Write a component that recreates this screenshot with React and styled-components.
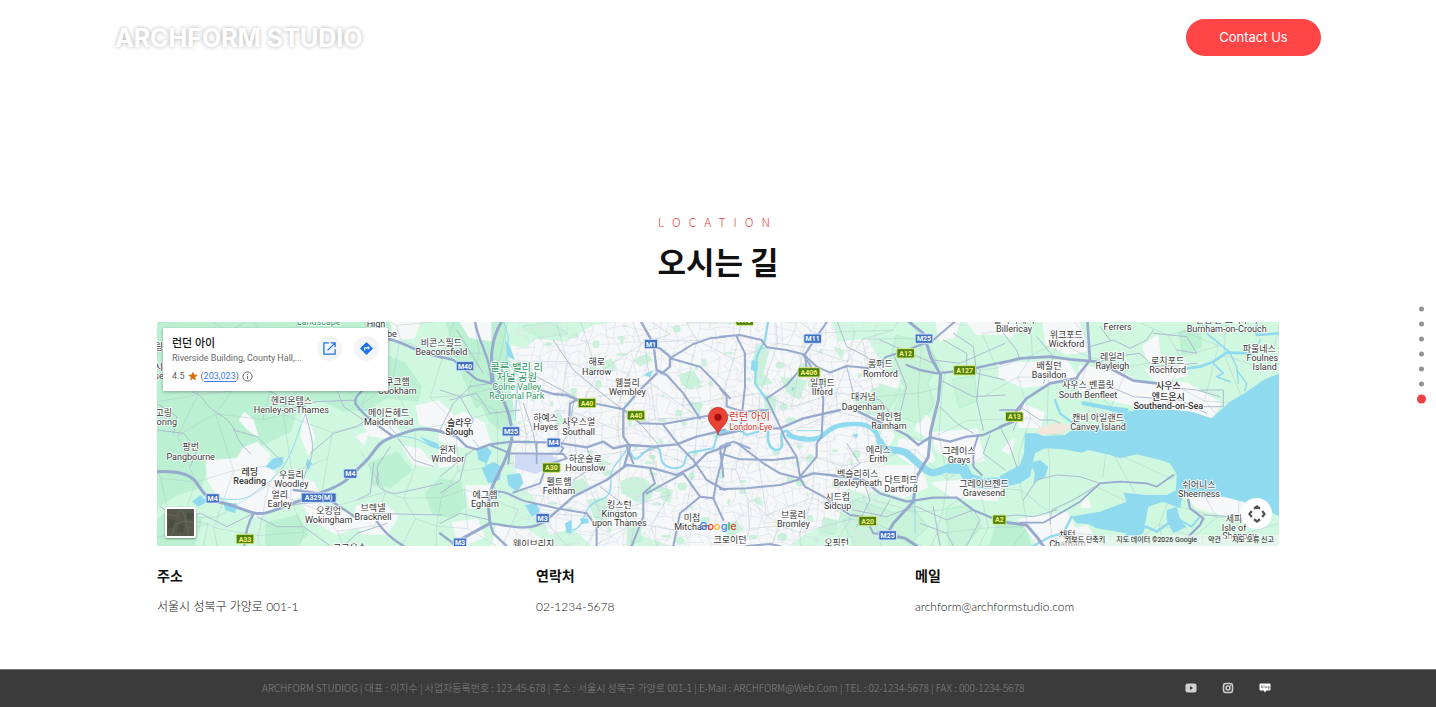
import styled, { createGlobalStyle } from 'styled-components';

const GlobalStyle = createGlobalStyle`
  * {
    box-sizing: border-box;
  }
  body {
    margin: 0;
    background: #fff;
    color: #111;
    font-family: Inter, 'Noto Sans CJK KR', sans-serif;
  }
  a {
    color: inherit;
    text-decoration: none;
  }
  button {
    padding: 0;
    border: 0;
    font: inherit;
    cursor: pointer;
  }
  h1, h2, h3, p {
    margin: 0;
  }
`;

const Page = styled.div`
  min-height: 100vh;
  display: flex;
  flex-direction: column;
`;

const Header = styled.header`
  height: 75px;
  padding: 0 115px;
  display: flex;
  justify-content: space-between;
  align-items: center;
`;

const Logo = styled.a`
  font-size: 25px;
  line-height: 36px;
  font-weight: 700;
  color: #fff;
  text-shadow: 0 0 4px rgba(0, 0, 0, 0.3);
`;

const ContactButton = styled.button`
  width: 135px;
  height: 37px;
  padding-bottom: 2px;
  border-radius: 20px;
  background: #ff4545;
  color: #fff;
  font-size: 13px;
`;

const Main = styled.main`
  flex: 1;
  padding: 135px 157px 0;
`;

const Heading = styled.div`
  display: flex;
  flex-direction: column;
  align-items: center;
  margin-bottom: 34px;
`;

const Eyebrow = styled.p`
  font-family: 'Noto Sans CJK KR', sans-serif;
  font-size: 12px;
  line-height: 24px;
  font-weight: 300;
  letter-spacing: 8px;
  color: #e8453f;
`;

const Title = styled.h1`
  font-family: 'Noto Sans CJK KR', sans-serif;
  font-size: 31px;
  line-height: 54px;
  font-weight: 700;
`;

const MapBox = styled.section`
  position: relative;
  height: 224px;
  overflow: hidden;
  background: #d0f8e1;
  font-family: Roboto, 'Noto Sans CJK KR', sans-serif;
`;

const MapDrawing = styled.svg`
  display: block;
  width: 100%;
  height: 100%;
`;

const Road = styled.path`
  fill: none;
  stroke: ${props => (props.$minor ? '#adbccf' : '#97a9cd')};
  stroke-width: ${props => props.$width};
  stroke-linejoin: round;
  stroke-linecap: round;
`;

const River = styled.path`
  fill: none;
  stroke: #8fdaee;
  stroke-width: ${props => props.$width};
  stroke-linejoin: round;
  stroke-linecap: round;
`;

const PlaceName = styled.text`
  font-size: 27px;
  font-weight: ${props => (props.$bold ? 500 : 400)};
  fill: ${props => props.$color || '#333'};
  stroke: #fff;
  stroke-width: 5px;
  stroke-linejoin: round;
  paint-order: stroke;
  text-anchor: ${props => props.$anchor || 'middle'};
`;

const ShieldText = styled.text`
  font-size: 21px;
  font-weight: 700;
  fill: ${props => (props.$green ? '#fff27a' : '#fff')};
  text-anchor: middle;
`;

const PlaceCard = styled.article`
  position: absolute;
  top: 6px;
  left: 6px;
  width: 225px;
  height: 63px;
  padding: 8px 9px;
  display: flex;
  gap: 12px;
  background: #fff;
  box-shadow: 0 1px 3px rgba(0, 0, 0, 0.3);
`;

const PlaceInfo = styled.div`
  width: 137px;
  white-space: nowrap;
`;

const PlaceTitle = styled.h2`
  font-size: 11px;
  line-height: 16px;
  font-weight: 500;
`;

const PlaceAddress = styled.p`
  font-size: 9px;
  line-height: 13px;
  color: #666;
`;

const Rating = styled.div`
  display: flex;
  align-items: center;
  gap: 3px;
  margin-top: 4px;
  font-size: 9px;
  line-height: 14px;
  color: #5b5b5b;

  a {
    color: #3b78e7;
    border-bottom: 1px solid #3b78e7;
  }
  span {
    line-height: 10px;
  }
`;

const RoundButton = styled.button`
  flex: none;
  width: 25px;
  height: 25px;
  border-radius: 50%;
  display: flex;
  align-items: center;
  justify-content: center;
  background: #f3f4f5;
`;

const SatelliteButton = styled.button`
  position: absolute;
  left: 8px;
  bottom: 8px;
  width: 31px;
  height: 31px;
  border: 2px solid #fff;
  border-radius: 2px;
  overflow: hidden;
  box-shadow: 0 1px 2px rgba(0, 0, 0, 0.4);

  svg {
    display: block;
  }
`;

const PanButton = styled.button`
  position: absolute;
  right: 7px;
  bottom: 17px;
  width: 31px;
  height: 31px;
  border-radius: 50%;
  background: #fff;
  display: flex;
  align-items: center;
  justify-content: center;
`;

const GoogleMark = styled.a`
  position: absolute;
  left: 50%;
  bottom: 13px;
  transform: translateX(-50%);
  font-family: Inter, sans-serif;
  font-size: 11px;
  line-height: 14px;
  font-weight: 500;
`;

const GoogleLetter = styled.span`
  color: ${props => props.$color};
`;

const MapTerms = styled.div`
  position: absolute;
  right: 0;
  bottom: 0;
  display: flex;
  gap: 1px;
  font-size: 7px;
  line-height: 11px;
  white-space: nowrap;

  > * {
    padding: 0 5px;
    background: rgba(245, 245, 245, 0.6);
    color: #111;
  }
`;

const Contacts = styled.section`
  display: grid;
  grid-template-columns: repeat(3, 1fr);
  gap: 15px;
  padding: 18px 0 39px;
  font-family: Lato, 'Noto Sans CJK KR', sans-serif;
`;

const ContactTitle = styled.h3`
  font-size: 14px;
  line-height: 24px;
  font-weight: 700;
`;

const ContactText = styled.p`
  margin-top: 7px;
  font-size: 12px;
  line-height: 24px;
  font-weight: 300;
  color: #111;
`;

const Footer = styled.footer`
  min-height: 38px;
  padding: 0 165px 2px 262px;
  display: flex;
  align-items: center;
  justify-content: space-between;
  background: #3b3b3b;
  border-top: 1px solid #777;
  color: #858585;
  font-family: 'Noto Sans CJK KR', sans-serif;
  font-size: 10px;
  line-height: 16px;
  font-weight: 300;
`;

const SocialLinks = styled.nav`
  display: flex;
  gap: 25px;

  a {
    display: flex;
  }
`;

const DotNav = styled.nav`
  position: fixed;
  right: 7px;
  top: 50%;
  transform: translateY(-50%);
  display: flex;
  flex-direction: column;
`;

const Dot = styled.a`
  width: 15px;
  height: 15px;
  display: flex;
  align-items: center;
  justify-content: center;

  &::before {
    content: '';
    width: ${props => (props.$active ? 9 : 5)}px;
    height: ${props => (props.$active ? 9 : 5)}px;
    border-radius: 50%;
    background: ${props => (props.$active ? '#ee4040' : '#929292')};
  }
`;

// The map is drawn in four tiles, side by side. x is where a tile starts.
const tiles = [
  {
    x: 0,
    forest: [
      'M0 0H560L540 150 480 240 420 250 400 330 300 380 250 410 150 430 130 500 60 520 0 560Z',
      'M560 0H700L690 80 640 140 690 230 640 260 560 270 480 230Z',
      'M0 600L70 560 130 600 110 678H0Z',
      'M640 90L740 130 790 200 780 240 680 230Z',
      'M640 430L720 400 760 450 700 500 650 490Z',
      'M330 610L420 590 450 640 410 678H330Z',
    ],
    urban: [
      'M150 425L240 418 262 385 300 370 335 405 325 440 370 470 410 470 420 530 350 570 300 590 250 560 180 520 155 480Z',
      'M262 280L285 300 300 345 272 325 250 300Z',
      'M420 470L470 490 500 560 570 580 600 620 540 640 470 600 430 540Z',
      'M600 560L680 550 720 590 690 640 620 640 590 600Z',
      'M620 310L690 300 730 340 700 355 640 345Z',
      'M780 260L845 245 900 300 850 325 790 310Z',
      'M740 380L790 390 830 440 770 430Z',
      'M440 270L470 350 455 400 435 350Z',
      'M700 0H790L770 50 720 60Z',
      'M600 350L630 340 620 370Z',
    ],
    lakes: [
      'M325 440L350 415 380 410 375 435 350 450Z',
      'M450 415L465 430 455 450 447 435Z',
      'M105 545L130 525 150 545 125 560Z',
      'M200 550L240 550 235 580 205 570Z',
      'M790 350L840 370 855 390 820 380Z',
    ],
    rivers: [['M130 540C180 520 240 560 290 520S380 470 420 350S450 300 440 240', 3], ['M600 270C700 260 690 350 740 350S800 380 855 385', 3]],
    minor: [
      'M105 215C150 230 130 250 190 285S220 350 280 400',
      'M0 330L80 340 120 390 100 440',
      'M330 210L370 230 390 270 480 245 600 240',
      'M440 250C450 320 480 370 460 420S440 480 430 510',
      'M460 400L530 340 600 320 640 290',
      'M540 210L560 260 620 300',
      'M370 560L440 550 520 545 610 600',
      'M665 460C640 500 690 520 720 520L855 490',
      'M720 350L770 420 830 440',
      'M640 580L855 585',
      'M10 560L70 600 130 580 210 620 290 580',
      'M300 590L360 620 440 620 520 678',
      'M700 380L660 440 665 490',
      'M230 330L300 350 380 430',
      'M0 250L60 290 50 340M600 540L640 520 650 430',
      'M560 678L600 640 690 610',
    ],
    major: [
      ['M0 455C60 452 100 460 120 490S150 540 200 550S290 590 330 578S420 545 500 515S580 465 620 430S650 370 710 350S780 318 855 335', 9],
      ['M680 55C740 60 750 90 855 112', 8],
      ['M710 350Q620 290 595 250Q590 230 625 205', 7],
      ['M290 580Q266 620 262 678', 7],
      ['M410 510L490 520 600 595M660 605Q690 650 740 678', 7],
    ],
    shields: [['M4', 167, 535], ['M4', 580, 461], ['A329(M)', 485, 533], ['A33', 264, 657, true]],
    places: [
      [485, -13, '', 'Landscape', '#2c9461'],
      [657, -6, '', 'High', ''],
      [660, 22, '', 'Wycombe', ''],
      [721, 194, '쿠크햄', 'Cookham', ''],
      [403, 251, '헨리온템스', 'Henley-on-Thames', ''],
      [695, 287, '메이든헤드', 'Maidenhead', ''],
      [20, 287, '고링', 'Goring', ''],
      [101, 391, '팡번', 'Pangbourne', ''],
      [278, 464, '레딩', 'Reading', 'bold'],
      [403, 474, '우들리', 'Woodley', ''],
      [368, 534, '얼리', 'Earley', ''],
      [515, 582, '오킹엄', 'Wokingham', ''],
      [648, 573, '브렉넬', 'Bracknell', ''],
      [578, 692, '크로우손', '', ''],
      [6, 89, '링', '', ''],
      [6, 149, '시', 'se', ''],
    ],
  },
  {
    x: 849,
    forest: [
      'M20 0H190L200 130 150 230 110 260 60 140Z',
      'M170 110L210 130 230 240 200 340 150 300 120 240Z',
      'M0 480L60 490 70 560 40 590 -20 580 -40 520Z',
      'M540 490C560 465 620 460 635 500S610 560 580 540L545 520Z',
      'M480 130L515 115 530 150 500 165Z',
      'M715 165L760 150 785 190 750 210 725 195Z',
      'M750 245L790 250 780 285Z',
      'M440 540L500 530 520 590 470 610Z',
      'M380 490L430 475 445 500 400 530Z',
      'M560 610L610 600 600 660 560 678Z',
      'M660 500L700 510 690 550 665 540Z',
      'M340 290L360 275 375 310 350 320Z',
      'M580 120L620 100 640 120 600 140Z',
      'M250 20L330 10 380 40 300 50Z',
    ],
    urban: [
      'M215 80L260 90 290 60 380 70 460 20 600 0H870V678H700L600 640 560 678H460L400 620 330 640 280 520 240 500 220 400 230 300 215 200Z',
      'M0 310L70 280 130 310 150 370 90 385 0 360Z',
      'M60 0L150 0 150 60 90 50Z',
      'M40 610L110 600 130 650 60 678Z',
      'M170 620L260 630 330 678H160Z',
      'M80 500L150 500 140 560 90 560Z',
      'M0 380L40 390 60 430 0 440Z',
    ],
    lakes: [
      'M110 390L135 375 155 395 140 430 115 420Z',
      'M125 445L160 425 185 440 180 480 145 490Z',
      'M200 465L240 460 250 490 230 515 205 495Z',
      'M255 555L290 550 300 575 275 590Z',
      'M375 610L395 600 395 640 380 640Z',
      'M420 595L445 595 445 610 425 612Z',
      'M195 60L210 80 225 120 205 110Z',
      'M610 165L640 150 630 172Z',
    ],
    rivers: [
      ['M190 0L205 50 200 120 235 170 225 300', 3],
      ['M400 630C440 620 420 560 480 540S490 470 530 430L560 390', 4],
      ['M570 395C590 450 610 380 645 380C680 390 640 435 700 445C760 445 715 395 765 395L820 385 832 345 870 336', 6],
      ['M100 360L130 400 150 480 180 530', 3],
    ],
    minor: [
      'M0 330L40 250 90 200 150 190',
      'M0 470L60 420 100 390',
      'M50 30L130 160M30 240L110 220 150 280 240 270',
      'M290 170L420 240M400 250L385 340 360 380',
      'M0 520L60 480 80 400',
      'M0 210L60 230 100 300 80 350',
      'M340 60L400 150 460 200 550 270',
      'M600 310L660 380 600 400',
      'M440 380L460 440 400 480',
      'M0 610L60 580 150 600',
      'M250 250L280 340 290 400',
      'M480 500L560 560 560 610',
    ],
    major: [
      ['M188 0C150 60 150 120 160 190C200 250 218 300 215 360C200 430 160 480 150 520C140 560 150 600 150 610L40 670', 9],
      ['M105 0C110 60 150 100 155 190', 7],
      ['M0 110L40 120 110 178 155 190M300 210L340 222 380 225 412 240', 7],
      ['M0 335L50 350 80 380 110 388 150 373 215 365 350 368 440 382 490 365 520 385 565 375 640 380 710 373 770 350 855 330', 7],
      ['M150 610C200 615 270 640 320 600L400 530 500 480 560 435 640 445 710 465 760 440 800 400 870 375', 7],
      ['M150 375L210 400 370 402 380 415 320 435 300 490 220 518M210 380L205 430', 6],
      ['M150 520C200 500 220 540 270 547L350 565 440 580 470 620 470 678', 6],
      ['M150 610L160 640 200 678M0 640L50 678', 7],
      ['M412 240L550 268 600 310 670 312 720 303 800 288 870 285', 6],
      ['M600 0L640 70 650 150 665 160 690 140 690 110 660 85 640 80M650 160L600 210 550 268 550 350 570 380 552 440', 7],
      ['M650 150L680 165 730 220 780 295M690 115L760 72 810 55 855 50M690 115L780 140 820 180 870 235', 6],
      ['M670 315L720 380 760 420 800 480 855 510M385 340L390 250 410 240', 6],
      ['M630 445L645 490 610 520 610 590 575 678M620 520L730 460 780 530 820 535 850 600M780 530L720 580 700 678', 6],
      ['M860 370L830 480 820 535M560 380L580 430M360 400L370 385 350 368', 6],
      ['M290 365V430', 5],
    ],
    airport: 'M225 405L330 402 365 425 310 450 290 462 225 445Z',
    shields: [
      ['M40', 75, 138],
      ['M25', 213, 334],
      ['M4', 341, 368],
      ['M3', 308, 594],
      ['M3', 60, 668],
      ['M1', 633, 72],
      ['A40', 441, 249, true],
      ['A40', 588, 286, true],
      ['A30', 334, 443, true],
    ],
    places: [
      [4, 78, '비콘스필드', 'Beaconsfield', ''],
      [230, 152, '콜른 밸리 리', '', '#2c9461', 31],
      [230, 184, '저널 공원', '', '#2c9461', 31],
      [230, 183, '', 'Colne Valley', '#2c9461'],
      [230, 208, '', 'Regional Park', '#2c9461'],
      [470, 136, '해로', 'Harrow', ''],
      [562, 197, '웸블리', 'Wembley', ''],
      [317, 303, '하예스', 'Hayes', ''],
      [416, 316, '사우스얼', 'Southall', ''],
      [58, 318, '슬라우', 'Slough', 'bold'],
      [23, 398, '윈저', 'Windsor', ''],
      [436, 425, '하운슬로', 'Hounslow', ''],
      [357, 494, '펠트햄', 'Feltham', ''],
      [135, 533, '에그햄', 'Egham', ''],
      [538, 564, '킹스턴', 'Kingston', ''],
      [538, 590, '', 'upon Thames', ''],
      [756, 602, '미첨', 'Mitcham', ''],
      [281, 682, '웨이브리지', '', ''],
    ],
  },
  {
    x: 1689,
    forest: [
      'M110 70L150 90 130 160 160 190 110 200 95 130Z',
      'M130 220L170 230 165 290 135 270Z',
      'M530 50L620 70 650 130 620 190 640 250 600 310 520 280 560 200 510 130Z',
      'M390 230L450 220 490 270 440 290Z',
      'M480 190L540 210 500 270 460 240Z',
      'M400 540L520 580 580 570 620 620 560 678H400Z',
      'M680 570L740 560 780 620 730 678H690Z',
      'M700 180L760 170 770 240 720 260Z',
      'M370 600L410 590 430 640 390 650Z',
      'M180 170L260 180 240 240 200 220Z',
      'M340 80L375 90 365 120Z',
      'M10 620L50 600 70 630 30 650Z',
      'M310 590L350 600 340 640 300 630Z',
      'M90 540L120 530 130 560Z',
    ],
    urban: [
      'M0 0H330L350 70 440 60 480 130 540 170 520 230 450 240 500 310 520 350 480 410 500 480 440 520 380 500 350 600 250 640 200 678H0Z',
      'M540 360L620 370 640 420 590 440 530 400Z',
      'M450 440L600 440 620 500 550 530 460 500Z',
      'M640 340L770 330 790 420 720 430 650 390Z',
      'M650 0H720L700 50 660 60Z',
      'M640 490L760 480 840 500 830 540 700 530Z',
      'M600 270L630 300 620 350 590 330Z',
      'M740 0H840L830 40 770 40Z',
      'M450 620L520 630 540 670 450 670Z',
    ],
    lakes: ['M95 120L115 125 112 155 92 150Z', 'M395 345L415 340 410 355Z', 'M215 200L225 205 215 215Z'],
    rivers: [
      ['M145 0L135 60 110 110 105 190 140 240', 7],
      ['M0 337L60 330 80 345 115 335', 7],
      ['M145 335C135 405 195 400 185 365C180 325 205 325 215 350L290 358', 8],
      ['M205 345C240 360 290 365 310 345S350 312 405 312S475 340 480 372', 14],
      ['M480 365C490 405 530 380 560 400S620 470 655 455S700 440 725 450', 22],
      ['M690 445L730 445 745 475 790 490 850 488', 32],
      ['M585 540V640M230 332H305', 3],
    ],
    minor: [
      'M350 0L380 80 440 110 500 160',
      'M380 140L400 220 480 240 520 290',
      'M700 40L760 80 770 160 855 180',
      'M660 180L760 230 855 225',
      'M670 60L740 100 740 150M780 150L770 240 790 330',
      'M660 260L710 310 760 340M520 100L560 200 540 280',
      'M430 480L450 540 410 620',
      'M590 560L680 600 760 570 780 600 740 678',
      'M380 370L420 430 360 470M600 610L680 640 700 678',
      'M400 570L500 590 580 560',
      'M810 345L790 400 855 450',
      'M640 120L720 130 855 70',
      'M510 540L480 590M640 560L660 678M480 60L640 130',
    ],
    major: [
      ['M0 50L60 45 125 60 140 82 200 90 250 103 290 140 330 158 380 138 450 145 500 110 540 98 640 60 710 0', 6],
      ['M325 0L290 50 255 103 260 150M240 150L200 195 140 235 180 320 195 355 230 410 240 470M250 105L300 180 310 240 305 350 290 370 290 410 240 470', 6],
      ['M50 50L75 100 75 200 62 320M0 205L20 230 20 260 70 275 145 270', 6],
      ['M560 0L610 40 632 110 662 165 655 240 632 335 625 410 590 470 580 545 520 610 500 645M500 645L555 655 590 678', 9],
      ['M560 135L600 150 650 160 740 150 855 125', 7],
      ['M0 345L90 325 180 325 250 295 360 270M415 275L450 292 500 315 560 345 595 375 630 352 690 365 740 350 790 345 855 315', 7],
      ['M775 345L760 390 760 440 785 465', 6],
      ['M235 475L280 460 330 465 430 480 480 520 560 545 640 533 710 533 760 570 855 610', 7],
      ['M240 475L255 500 310 530 390 585 430 590M450 620L460 640 500 645', 6],
      ['M0 400L60 418 160 420 225 412M50 368L130 430 180 460 240 475M0 508L80 505 180 495 240 478', 6],
      ['M0 380L40 365 90 385M0 380L10 470', 6],
      ['M80 678L150 672 180 678', 6],
    ],
    shields: [
      ['M11', 278, 56],
      ['M25', 612, 56],
      ['M25', 503, 646],
      ['A12', 557, 100, true],
      ['A406', 267, 157, true],
      ['A127', 734, 151, true],
      ['A20', 443, 603, true],
      ['A2', 838, 599, true],
      ['A10', 74, 2, true],
    ],
    places: [
      [481, 142, '롬퍼드', 'Romford', ''],
      [307, 198, '일퍼드', 'Ilford', ''],
      [430, 241, '대거넘', 'Dagenham', ''],
      [507, 300, '레인험', 'Rainham', ''],
      [475, 398, '에리스', 'Erith', ''],
      [717, 402, '그레이스', 'Grays', ''],
      [413, 470, '벡슬리히스', 'Bexleyheath', ''],
      [543, 488, '다트퍼드', 'Dartford', ''],
      [792, 500, '그레이브젠드', 'Gravesend', ''],
      [353, 540, '시드컵', 'Sidcup', ''],
      [220, 593, '브롬리', 'Bromley', ''],
      [350, 678, '오핑턴', '', ''],
      [30, 670, '크로이던', '', ''],
    ],
  },
  {
    x: 2529,
    forest: [
      'M0 600L70 620 90 678H-30Z',
      'M540 40L600 20 600 80 550 100Z',
      'M300 160L340 150 330 200Z',
    ],
    urban: [
      'M0 130L80 130 200 125 230 170 150 190 70 200 0 170Z',
      'M240 140L350 150 420 190 560 190 660 250 635 292 540 270 420 260 340 240 240 210Z',
      'M130 0H230L270 90 200 100 140 70Z',
      'M440 150L560 130 560 165 470 185Z',
      'M60 250L130 280 120 320 60 320Z',
      'M60 600L200 580 230 640 210 678H120Z',
      'M180 640L260 620 300 678H170Z',
      'M560 530L680 530 760 560 740 600 620 570 590 560Z',
      'M430 80L470 50 480 110 450 130Z',
      'M40 360L30 400 10 390ZM260 530L270 560 245 560Z',
      'M0 10L60 20 30 50 0 40Z',
    ],
    sand: 'M110 325L180 305 210 320 190 340 120 345Z',
    sea: 'M840 160L790 180 740 215 690 245 635 295 575 275 500 268 440 262 385 275 330 258 290 255 360 285 370 330 220 328 195 345 130 348 110 340 75 340 72 400 60 435 0 468V505L60 490 90 470 105 400 135 385 190 388 245 398 265 390 330 405 360 415 410 403 480 420 510 430 530 462 528 510 500 525 440 525 370 518 380 545 300 575 240 585 215 590 230 610 265 612 290 625 380 640 400 655 430 640 445 560 490 545 540 565 548 530 570 525 620 535 670 530 740 548 790 565 840 590Z',
    lakes: [
      'M90 430L120 420 145 440 135 470 100 490 105 460Z',
      'M500 570L530 560 540 600 560 620 520 640 500 600Z',
    ],
    rivers: [
      ['M560 145L600 140 640 125 680 98 760 100M770 0V45L837 40', 8],
      ['M600 0L625 45 645 60 690 98M640 130L670 160 650 170 690 185', 5],
      ['M690 100L710 140 715 190M710 150L740 190 735 212M780 60L770 90', 4],
      ['M165 240L180 280 220 310 300 330', 7],
      ['M250 250L330 265 380 270', 12],
      ['M100 678L150 650 190 640 215 590', 7],
      ['M380 645L440 620 470 635 520 600', 8],
      ['M520 570L540 600 575 620 600 590', 6],
    ],
    minor: [
      'M10 40L50 90 60 120M110 50L160 110 130 190',
      'M270 80L340 60 390 85 440 60 460 30',
      'M290 130L340 110 420 100 460 140 590 130',
      'M260 210L330 200 400 230 540 240 620 280',
      'M70 540L110 480 170 465 240 470 300 490',
      'M60 260L120 300 160 300 180 310',
      'M150 610L155 570 220 540 300 490',
      'M0 320L30 380 50 440M490 200L590 210 660 230',
      'M600 210H670V260H600M460 40L560 50 590 100 530 90',
      'M330 60L300 20M610 585L700 590',
      'M60 280L40 330M0 590L50 585 100 590 170 570',
    ],
    major: [
      ['M0 130L60 115 150 110 210 118 290 125 340 150 400 182 470 190', 8],
      ['M262 0L270 120 235 165 230 175 150 190 80 235 50 270 40 305 0 320', 8],
      ['M15 607L80 615 110 650 130 678', 9],
      ['M60 608L130 608 180 580 240 545 300 490 360 485 440 490 470 500 520 465', 5],
      ['M565 540L570 565 610 595 600 615 565 650', 7],
      ['M0 270L60 270 70 250', 5],
    ],
    shields: [['A13', 43, 290, true]],
    places: [
      [42, 8, '빌러리케이', 'Billericay', ''],
      [199, 54, '위크포드', 'Wickford', ''],
      [353, 2, '', 'Ferrers', ''],
      [680, 8, '번햄 온 크라우치', 'Burnham-on-Crouch', ''],
      [147, 147, '배질던', 'Basildon', ''],
      [337, 119, '레일리', 'Rayleigh', ''],
      [503, 131, '로치포드', 'Rochford', ''],
      [778, 95, '파울네스', '', ''],
      [787, 95, '', 'Foulnes', ''],
      [794, 122, '', 'Island', ''],
      [264, 205, '사우스 벤플릿', 'South Benfleet', ''],
      [505, 208, '사우스', '', 'bold'],
      [505, 239, '엔드온시', 'Southend-on-Sea', 'bold'],
      [294, 302, '캔비 아일랜드', 'Canvey Island', ''],
      [597, 504, '쉬어니스', 'Sheerness', ''],
      [702, 605, '세피', 'Isle of', ''],
      [718, 628, '', 'Sheppey', ''],
      [202, 654, '채텀', 'Chatham', ''],
    ],
  },
];

const noise = n => {
  const v = Math.sin(n * 127.1) * 43758.5453;
  return v - Math.floor(v);
};

// small streets: a grid with its crossings pushed around
const streets = (x0, y0, cols, rows, step, seed) => {
  const at = (c, r) => {
    const n = c * 57 + r * 131 + seed;
    return `${Math.round(x0 + c * step + (noise(n) - 0.5) * step)} ${Math.round(
      y0 + r * step + (noise(n + 0.5) - 0.5) * step
    )}`;
  };
  let d = '';
  for (let r = 0; r < rows; r++) {
    for (let c = 0; c < cols; c++) {
      if (noise(c * 13 + r * 71 + seed) > 0.15) d += `M${at(c, r)}L${at(c + 1, r)}`;
      if (noise(c * 31 + r * 17 + seed) > 0.2) d += `M${at(c, r)}L${at(c, r + 1)}`;
    }
  }
  return d;
};

const cityStreets = streets(1080, 0, 44, 28, 25, 3);
const countryRoads = streets(0, 0, 32, 7, 108, 9);

const googleLetters = [
  ['G', '#4285f4'],
  ['o', '#ea4335'],
  ['o', '#fbbc05'],
  ['g', '#4285f4'],
  ['l', '#34a853'],
  ['e', '#ea4335'],
];

const contacts = [
  { title: '주소', text: '서울시 성북구 가양로 001-1' },
  { title: '연락처', text: '02-1234-5678' },
  { title: '메일', text: 'archform@archformstudio.com' },
];

const sections = ['main', 'about', 'works', 'interior', 'news', 'partners', 'location'];

const Shield = ({ name, x, y, green }) => {
  const width = name.length * 13 + 14;
  return (
    <g>
      <rect
        x={x - width / 2}
        y={y - 14}
        width={width}
        height="28"
        rx="4"
        fill={green ? '#4b8113' : '#3e70c4'}
        stroke={green ? '#d9e67d' : '#d7e3fb'}
        strokeWidth="3"
      />
      <ShieldText x={x} y={y + 8} $green={green}>
        {name}
      </ShieldText>
    </g>
  );
};

const Place = ({ x, y, ko, en, kind, size }) => (
  <PlaceName $bold={kind === 'bold'} $color={kind && kind !== 'bold' ? kind : undefined}>
    {ko && (
      <tspan x={x} y={y} fontSize={size}>
        {ko}
      </tspan>
    )}
    {en && (
      <tspan x={x} y={y + 28}>
        {en}
      </tspan>
    )}
  </PlaceName>
);

const LondonMap = () => (
  <MapDrawing viewBox="0 6 3366 672" preserveAspectRatio="xMidYMid slice" role="img" aria-label="런던 아이 지도">
    {tiles.map(tile => (
      <g key={tile.x} transform={`translate(${tile.x} 0)`}>
        {tile.forest.map(d => (
          <path key={d} d={d} fill="#bbf0d3" stroke="#bbf0d3" strokeWidth="10" strokeLinejoin="round" />
        ))}
        {tile.urban.map(d => (
          <path key={d} d={d} fill="#f6f7f9" stroke="#f6f7f9" strokeWidth="8" strokeLinejoin="round" />
        ))}
      </g>
    ))}
    {/* parks inside the city */}
    <g fill="#c8f3da">
      {tiles[1].forest.slice(3).map(d => (
        <path key={d} d={d} transform="translate(849 0)" />
      ))}
      {tiles[2].forest.map(d => (
        <path key={d} d={d} transform="translate(1689 0)" />
      ))}
      {Array.from({ length: 110 }, (_, i) => (
        <ellipse
          key={i}
          cx={Math.round(1080 + noise(i + 5) * 1150)}
          cy={Math.round(noise(i + 300) * 678)}
          rx={Math.round(4 + noise(i + 70) * 13)}
          ry={Math.round(4 + noise(i + 90) * 9)}
        />
      ))}
    </g>
    <path d={cityStreets} fill="none" stroke="#dde1ea" strokeWidth="2" />
    <path d={countryRoads} fill="none" stroke="#a9bfc4" strokeWidth="2" opacity="0.6" />
    {tiles.map(tile => (
      <g key={tile.x} transform={`translate(${tile.x} 0)`}>
        {tile.airport && <path d={tile.airport} fill="#cfdaf5" />}
        {tile.sea && <path d={tile.sea} fill="#8fdaee" />}
        {tile.sand && <path d={tile.sand} fill="#f3e7dc" />}
        {tile.lakes.map(d => (
          <path key={d} d={d} fill="#8fdaee" />
        ))}
        {tile.rivers.map(([d, width]) => (
          <River key={d} d={d} $width={width} />
        ))}
        {tile.minor.map(d => (
          <Road key={d} d={d} $minor $width={3} />
        ))}
        {tile.major.map(([d, width]) => (
          <Road key={d} d={d} $width={width} />
        ))}
      </g>
    ))}
    {tiles.map(tile => (
      <g key={tile.x} transform={`translate(${tile.x} 0)`}>
        {tile.shields.map(([name, x, y, green]) => (
          <Shield key={name + x} name={name} x={x} y={y} green={green} />
        ))}
        {tile.places.map(([x, y, ko, en, kind, size]) => (
          <Place key={`${x}-${y}`} x={x} y={y} ko={ko} en={en} kind={kind} size={size} />
        ))}
      </g>
    ))}
    {/* pin */}
    <path
      d="M1683 345C1679 322 1654 316 1654 291A29 29 0 0 1 1712 291C1712 316 1687 322 1683 345Z"
      fill="#ea4335"
      stroke="#c5221f"
      strokeWidth="2"
    />
    <circle cx="1683" cy="292" r="11" fill="#a50e0e" />
    <PlaceName $color="#d93025" $anchor="start">
      <tspan x="1717" y="301" fontSize="31">
        런던 아이
      </tspan>
      <tspan x="1717" y="329" fontSize="25">
        London Eye
      </tspan>
    </PlaceName>
  </MapDrawing>
);

const App = () => (
  <Page>
    <GlobalStyle />
    <Header>
      <Logo href="#main">ARCHFORM STUDIO</Logo>
      <ContactButton type="button">Contact Us</ContactButton>
    </Header>

    <Main>
      <Heading>
        <Eyebrow>LOCATION</Eyebrow>
        <Title>오시는 길</Title>
      </Heading>

      <MapBox>
        <LondonMap />
        <PlaceCard>
          <PlaceInfo>
            <PlaceTitle>런던 아이</PlaceTitle>
            <PlaceAddress>Riverside Building, County Hall,...</PlaceAddress>
            <Rating>
              4.5
              <svg width="10" height="10" viewBox="0 0 24 24" fill="#d56e0c">
                <path d="M12 1l3.2 7.6 8.3.7-6.3 5.4 1.9 8.1L12 18.5l-7.1 4.3 1.9-8.1L.5 9.3l8.3-.7z" />
              </svg>
              <span>
                (<a href="#reviews">203,023</a>)
              </span>
              <svg width="11" height="11" viewBox="0 0 24 24" fill="none" stroke="#555" strokeWidth="2">
                <circle cx="12" cy="12" r="10" />
                <path d="M12 11v6M12 7v2" />
              </svg>
            </Rating>
          </PlaceInfo>
          <RoundButton type="button" aria-label="큰 지도에서 보기">
            <svg width="15" height="15" viewBox="0 0 24 24" fill="none" stroke="#1a73e8" strokeWidth="2">
              <path d="M11 3H3v18h18v-8M14 3h7v7M21 3L9 15" />
            </svg>
          </RoundButton>
          <RoundButton type="button" aria-label="길찾기">
            <svg width="15" height="15" viewBox="0 0 24 24" fill="#1a73e8">
              <path d="M21.7 11.3l-9-9a1 1 0 0 0-1.4 0l-9 9a1 1 0 0 0 0 1.4l9 9a1 1 0 0 0 1.4 0l9-9a1 1 0 0 0 0-1.4zM14 14.5V12h-4v3H8v-4a1 1 0 0 1 1-1h5V7.5l3.5 3.5z" />
            </svg>
          </RoundButton>
        </PlaceCard>

        <SatelliteButton type="button" aria-label="위성 이미지 보기">
          <svg width="27" height="27" viewBox="0 0 27 27">
            <rect width="27" height="27" fill="#55584a" />
            <path d="M0 5l8 2 5-6M4 27l5-12 9-3 9 2M15 0l4 12 2 15" stroke="#66685a" fill="none" />
            <path d="M2 10l6 1-2 7-5 2zM12 15l5 1-1 8-6-1zM20 3l6 2-1 6-5-1z" fill="#484f3f" />
            <path d="M10 3l4 3-3 4-4-2zM20 15l5 2-2 6-4-3z" fill="#5e5c50" />
          </svg>
        </SatelliteButton>

        <GoogleMark href="#google" aria-label="Google">
          {googleLetters.map(([letter, color], i) => (
            <GoogleLetter key={i} $color={color}>
              {letter}
            </GoogleLetter>
          ))}
        </GoogleMark>

        <MapTerms>
          <a href="#keys">키보드 단축키</a>
          <span>지도 데이터 ©2026 Google</span>
          <a href="#terms">약관</a>
          <a href="#report">지도 오류 신고</a>
        </MapTerms>

        <PanButton type="button" aria-label="지도 카메라 컨트롤">
          <svg width="18" height="18" viewBox="0 0 24 24" fill="none" stroke="#555" strokeWidth="3">
            <path d="M8 5l4-3 4 3M8 19l4 3 4-3M5 8l-3 4 3 4M19 8l3 4-3 4" />
          </svg>
        </PanButton>
      </MapBox>

      <Contacts>
        {contacts.map(item => (
          <div key={item.title}>
            <ContactTitle>{item.title}</ContactTitle>
            <ContactText>{item.text}</ContactText>
          </div>
        ))}
      </Contacts>
    </Main>

    <Footer>
      <p>
        ARCHFORM STUDIOG | 대표 : 이지수 | 사업자등록번호 : 123-45-678 | 주소 : 서울시 성북구 가양로 001-1 | E-Mail :
        ARCHFORM@Web.Com | TEL : 02-1234-5678 | FAX : 000-1234-5678
      </p>
      <SocialLinks>
        <a href="#youtube" aria-label="YouTube">
          <svg width="12" height="12" viewBox="0 0 24 24" fill="#d0d0d0">
            <path d="M5 3h14q4 0 4 4v10q0 4-4 4H5q-4 0-4-4V7q0-4 4-4zm5 5v8l6-4z" />
          </svg>
        </a>
        <a href="#instagram" aria-label="Instagram">
          <svg width="12" height="12" viewBox="0 0 24 24" fill="none" stroke="#d0d0d0" strokeWidth="3">
            <rect x="3" y="3" width="18" height="18" rx="5" />
            <circle cx="12" cy="12" r="4" />
            <path d="M16 7h2" strokeWidth="2" />
          </svg>
        </a>
        <a href="#blog" aria-label="Blog">
          <svg width="12" height="12" viewBox="0 0 24 24">
            <path d="M3 3h18q2 0 2 2v10q0 2-2 2h-6l-3 4-3-4H3q-2 0-2-2V5q0-2 2-2z" fill="#fff" />
            <path d="M5 6v6h2v-3H5M10 6v6M14 9h1v3h-2v-3zM20 9h-2v3h2v-3 5h-2" stroke="#555" strokeWidth="1" fill="none" />
          </svg>
        </a>
      </SocialLinks>
    </Footer>

    <DotNav aria-label="섹션">
      {sections.map(name => (
        <Dot key={name} href={`#${name}`} aria-label={name} $active={name === 'location'} />
      ))}
    </DotNav>
  </Page>
);

export default App;
